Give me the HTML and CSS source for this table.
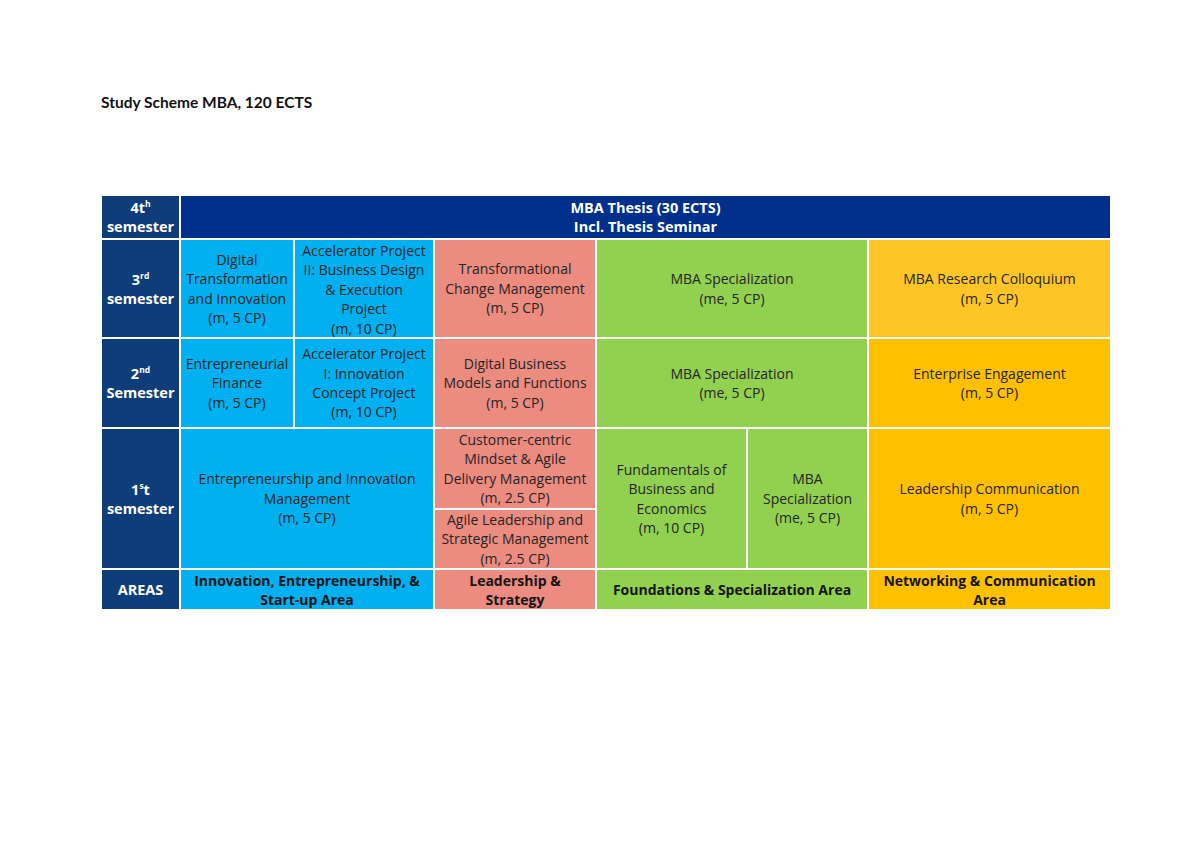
FILE: index.html
```html
<!DOCTYPE html>
<html lang="en">
<head>
<meta charset="utf-8">
<title>Study Scheme MBA, 120 ECTS</title>
<link rel="stylesheet" href="styles.css">
</head>
<body>
<div class="page">
  <h1 class="title">Study Scheme MBA, 120 ECTS</h1>
  <div class="scheme">
    <div class="cell label r1"><p>4t<sup>h</sup><br>semester</p></div>
    <div class="cell banner r1 span-all"><p>MBA Thesis (30 ECTS)<br>Incl. Thesis Seminar</p></div>

    <div class="cell label r2"><p>3<sup>rd</sup><br>semester</p></div>
    <div class="cell blue r2 c2"><p>Digital<br>Transformation<br>and Innovation<br>(m, 5 CP)</p></div>
    <div class="cell blue r2 c3 top"><p>Accelerator Project<br>II: Business Design<br>&amp; Execution<br>Project<br>(m, 10 CP)</p></div>
    <div class="cell pink r2 c4"><p>Transformational<br>Change Management<br>(m, 5 CP)</p></div>
    <div class="cell green r2 c56"><p>MBA Specialization<br>(me, 5 CP)</p></div>
    <div class="cell yellow-light r2 c7"><p>MBA Research Colloquium<br>(m, 5 CP)</p></div>

    <div class="cell label r3"><p>2<sup>nd</sup><br>Semester</p></div>
    <div class="cell blue r3 c2"><p>Entrepreneurial<br>Finance<br>(m, 5 CP)</p></div>
    <div class="cell blue r3 c3"><p>Accelerator Project<br>I: Innovation<br>Concept Project<br>(m, 10 CP)</p></div>
    <div class="cell pink r3 c4"><p>Digital Business<br>Models and Functions<br>(m, 5 CP)</p></div>
    <div class="cell green r3 c56"><p>MBA Specialization<br>(me, 5 CP)</p></div>
    <div class="cell yellow r3 c7"><p>Enterprise Engagement<br>(m, 5 CP)</p></div>

    <div class="cell label r45"><p>1<sup>s</sup>t<br>semester</p></div>
    <div class="cell blue r45 c23"><p>Entrepreneurship and Innovation<br>Management<br>(m, 5 CP)</p></div>
    <div class="cell pink r4 c4"><p>Customer-centric<br>Mindset &amp; Agile<br>Delivery Management<br>(m, 2.5 CP)</p></div>
    <div class="cell pink r5 c4"><p>Agile Leadership and<br>Strategic Management<br>(m, 2.5 CP)</p></div>
    <div class="cell green r45 c5"><p>Fundamentals of<br>Business and<br>Economics<br>(m, 10 CP)</p></div>
    <div class="cell green r45 c6"><p>MBA<br>Specialization<br>(me, 5 CP)</p></div>
    <div class="cell yellow r45 c7"><p>Leadership Communication<br>(m, 5 CP)</p></div>

    <div class="cell label r6"><p>AREAS</p></div>
    <div class="cell blue area r6 c23"><p>Innovation, Entrepreneurship, &amp;<br>Start-up Area</p></div>
    <div class="cell pink area r6 c4"><p>Leadership &amp;<br>Strategy</p></div>
    <div class="cell green area r6 c56"><p>Foundations &amp; Specialization Area</p></div>
    <div class="cell yellow area r6 c7"><p>Networking &amp; Communication<br>Area</p></div>
  </div>
</div>
</body>
</html>
```

FILE: styles.css
```css
html, body {
  margin: 0;
  padding: 0;
  background: #ffffff;
}

.page {
  padding: 93px 0 0 102px;
}

.title {
  margin: 0 0 0 -1px;
  font-family: "Lato", "Open Sans", sans-serif;
  font-weight: 700;
  font-size: 15.5px;
  line-height: 19px;
  color: #111111;
}

.scheme {
  margin-top: 84px;
  display: grid;
  grid-template-columns: 77px 112px 138px 160px 149px 119px 241px;
  grid-template-rows: 42px 97px 88px 79px 58px 39px;
  gap: 2px;
  width: 1008px;
  font-family: "Open Sans", "Noto Sans", sans-serif;
  font-size: 14px;
  line-height: 19.4px;
  color: #252525;
}

.cell {
  display: flex;
  justify-content: center;
  align-items: center;
  text-align: center;
  overflow: hidden;
  white-space: nowrap;
}

.cell p {
  margin: 0;
}

.cell.top {
  align-items: flex-start;
  padding-top: 1px;
}

.cell sup {
  font-size: 8.5px;
  line-height: 0;
  vertical-align: 6px;
}

.label {
  grid-column: 1;
  background: #0f3d7a;
  color: #ffffff;
  font-weight: 700;
  font-size: 14.5px;
  line-height: 19px;
}

.banner {
  background: #00308c;
  color: #ffffff;
  font-weight: 700;
  font-size: 14.5px;
  line-height: 19px;
}

.blue { background: #00b0f0; }
.pink { background: #ec8b7f; }
.green { background: #92d050; }
.yellow { background: #ffc000; }
.yellow-light { background: #fdc525; }

.area {
  font-weight: 700;
  font-size: 14px;
  line-height: 19px;
  color: #141414;
}

.r1 { grid-row: 1; }
.r2 { grid-row: 2; }
.r3 { grid-row: 3; }
.r4 { grid-row: 4; }
.r5 { grid-row: 5; }
.r45 { grid-row: 4 / 6; }
.r6 { grid-row: 6; }

.span-all { grid-column: 2 / 8; }
.c2 { grid-column: 2; }
.c3 { grid-column: 3; }
.c23 { grid-column: 2 / 4; }
.c4 { grid-column: 4; }
.c5 { grid-column: 5; }
.c6 { grid-column: 6; }
.c56 { grid-column: 5 / 7; }
.c7 { grid-column: 7; }
```
